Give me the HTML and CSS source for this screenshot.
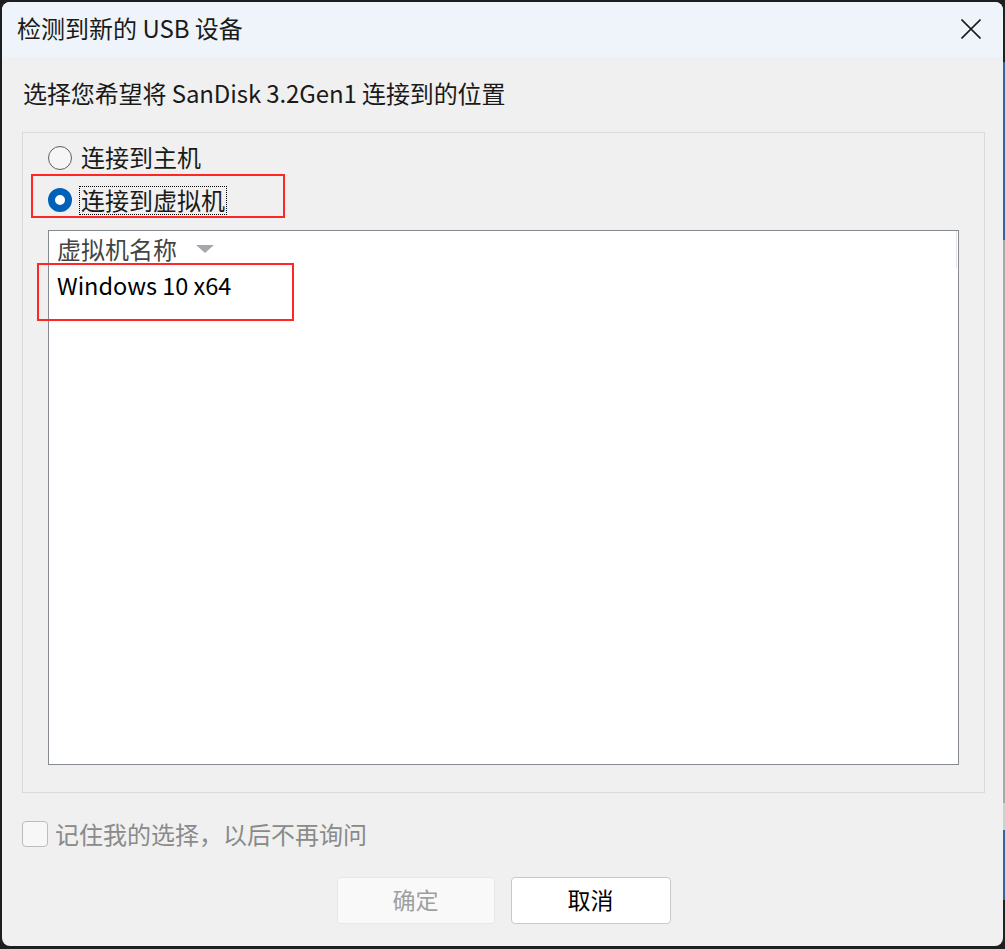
FILE: index.html
```html
<!DOCTYPE html>
<html lang="zh-CN">
<head>
<meta charset="utf-8">
<title>检测到新的 USB 设备</title>
<link rel="stylesheet" href="styles.css">
</head>
<body>
<div class="screen">
  <div class="window">
    <div class="titlebar">
      <span class="title">检测到新的 USB 设备</span>
      <svg class="close" width="20" height="20" viewBox="0 0 20 20"><path d="M0.5 0.5 L19.5 19.5 M19.5 0.5 L0.5 19.5" stroke="#1c1c1c" stroke-width="1.6" fill="none"/></svg>
    </div>
    <div class="content">
      <div class="prompt">选择您希望将 SanDisk 3.2Gen1 连接到的位置</div>
      <div class="group">
        <div class="radio-row">
          <span class="radio"></span><span class="radio-label">连接到主机</span>
        </div>
        <div class="radio-row">
          <span class="radio checked"></span><span class="radio-label focus">连接到虚拟机</span>
          <span class="mark mark-radio"></span>
        </div>
        <div class="listbox">
          <div class="list-header">
            <div class="col-head"><span>虚拟机名称</span><span class="sort-arrow"></span></div>
          </div>
          <div class="list-item">Windows 10 x64</div>
          <span class="mark mark-item"></span>
        </div>
      </div>
      <div class="check-row"><span class="checkbox"></span><span class="check-label">记住我的选择，以后不再询问</span></div>
      <div class="buttons">
        <button class="btn btn-ok" disabled>确定</button>
        <button class="btn btn-cancel">取消</button>
      </div>
    </div>
  </div>
  <div class="edge"></div>
</div>
</body>
</html>
```

FILE: styles.css
```css
html, body {
  margin: 0;
  padding: 0;
}
body {
  background: #1e1e1e;
  font-family: "Noto Sans CJK SC", "Noto Sans", sans-serif;
  color: #1a1a1a;
}
.screen {
  display: flex;
  width: 1005px;
  height: 949px;
  overflow: hidden;
}
.window {
  margin: 2px 0 3px 2px;
  width: 1001px;
  height: 944px;
  background: #f0f0f0;
  border-radius: 8px;
  overflow: hidden;
  display: flex;
  flex-direction: column;
}
.edge {
  width: 2px;
  height: 949px;
  background: linear-gradient(to bottom, #202020 0 62px, #33659c 62px 240px, #a9a9a9 240px 803px, #cfcfcf 803px 830px, #33659c 830px 900px, #202020 900px);
}
.titlebar {
  height: 55px;
  flex: none;
  background: #eef4f9;
  display: flex;
  align-items: center;
  justify-content: space-between;
  padding: 0 22px 0 15px;
}
.title {
  font-size: 24px;
  line-height: 30px;
  padding-bottom: 3px;
  color: #1a1a1a;
}
.close {
  display: block;
  margin-top: -1px;
}
.content {
  display: flex;
  flex-direction: column;
  padding: 0 18px 0 20px;
}
.prompt {
  margin-top: 24px;
  padding-left: 1px;
  font-size: 24px;
  line-height: 24px;
  letter-spacing: -0.1px;
  color: #1a1a1a;
}
.group {
  margin-top: 27px;
  height: 661px;
  box-sizing: border-box;
  border: 1px solid #dadada;
  padding: 4px 25px 0;
  display: flex;
  flex-direction: column;
}
.radio-row {
  position: relative;
  height: 42px;
  display: flex;
  align-items: center;
}
.radio {
  width: 24px;
  height: 24px;
  box-sizing: border-box;
  border-radius: 50%;
  border: 1.5px solid #5f5f5f;
  background: #f6f6f6;
  flex: none;
}
.radio.checked {
  border: 7px solid #0061b9;
  background: #ffffff;
}
.radio-label {
  margin-left: 9px;
  font-size: 24px;
  line-height: 26px;
  padding-bottom: 2px;
  color: #1a1a1a;
}
.radio-label.focus {
  margin-left: 7px;
  border: 1px dotted #000;
  padding: 0 1px 2px;
  line-height: 25px;
}
.mark {
  position: absolute;
  box-sizing: border-box;
  border: 2px solid #ff2626;
  pointer-events: none;
}
.mark-radio {
  left: -17px;
  top: -5px;
  width: 254px;
  height: 44px;
}
.listbox {
  position: relative;
  margin-top: 9px;
  height: 535px;
  box-sizing: border-box;
  border: 1px solid #868a91;
  background: #ffffff;
}
.list-header {
  height: 37px;
  display: flex;
}
.col-head {
  flex: 1;
  margin-right: 1px;
  border-right: 1px solid #e5e5e5;
  display: flex;
  align-items: center;
  padding-left: 8px;
  padding-bottom: 2px;
  font-size: 24px;
  color: #444444;
}
.sort-arrow {
  margin-left: 19px;
  margin-top: 0;
  width: 0;
  height: 0;
  border-left: 9px solid transparent;
  border-right: 9px solid transparent;
  border-top: 8px solid #a4a8ad;
}
.list-item {
  height: 38px;
  box-sizing: border-box;
  line-height: 34px;
  padding: 0 0 4px 8px;
  font-size: 23.5px;
  color: #000;
}
.mark-item {
  left: -12px;
  top: 32px;
  width: 257px;
  height: 58px;
}
.check-row {
  margin-top: 28px;
  height: 26px;
  display: flex;
  align-items: center;
}
.checkbox {
  width: 26px;
  height: 26px;
  box-sizing: border-box;
  border: 1px solid #bcbcbc;
  border-radius: 4px;
  background: #f7f7f7;
  flex: none;
}
.check-label {
  margin-left: 7px;
  font-size: 24px;
  line-height: 26px;
  padding-bottom: 1px;
  color: #8a8a8a;
}
.buttons {
  margin-top: 30px;
  display: flex;
  justify-content: center;
  gap: 16px;
}
.btn {
  height: 47px;
  box-sizing: border-box;
  border-radius: 4px;
  font-family: "Noto Sans CJK SC", sans-serif;
  font-size: 23px;
  padding: 0 0 4px;
}
.btn-ok {
  width: 158px;
  background: #f9f9f9;
  border: 1px solid #e8e8e8;
  color: #9f9f9f;
}
.btn-cancel {
  width: 160px;
  background: #ffffff;
  border: 1px solid #c9c9c9;
  color: #000000;
}
```
